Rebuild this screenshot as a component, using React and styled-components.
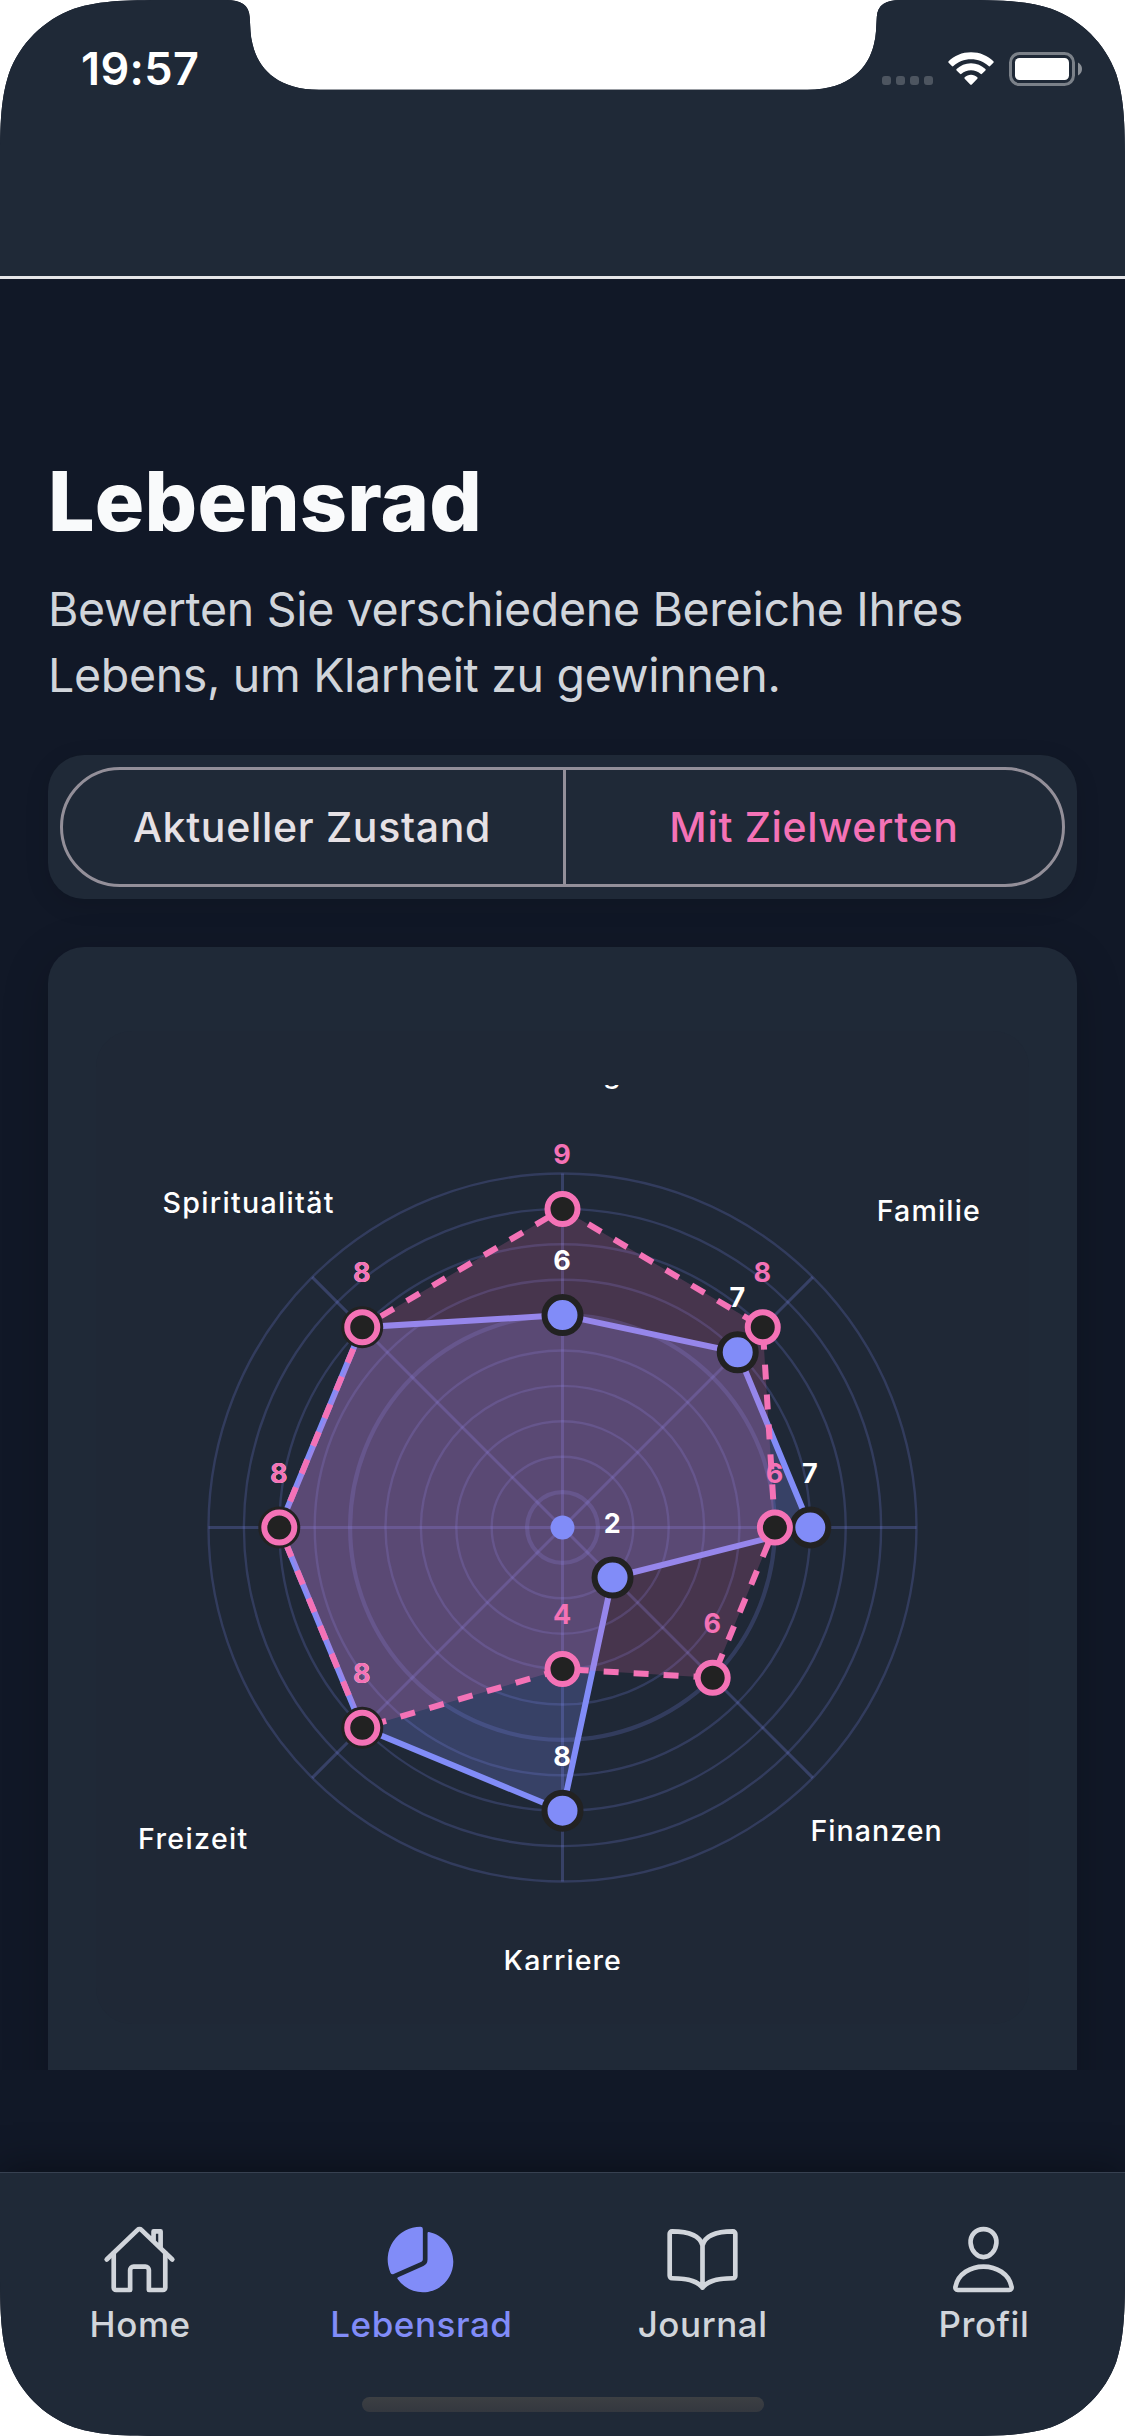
import React from 'react';
import styled, { createGlobalStyle } from 'styled-components';
import { IoHomeOutline, IoPieChart, IoBookOutline, IoPersonOutline } from 'react-icons/io5';

const color = {
  background: '#111827',
  surface: '#1f2937',
  inset: '#1f2836',
  text: '#f9fafb',
  muted: '#d1d5db',
  outline: '#938f99',
  primary: '#818cf8',
  target: '#f472b6',
  ink: '#222222',
};

const GlobalStyle = createGlobalStyle`
  *, *::before, *::after { box-sizing: border-box; }
  body {
    margin: 0;
    background: #ffffff;
    font-family: Inter, "Liberation Sans", sans-serif;
    -webkit-font-smoothing: antialiased;
  }
`;

/* Device silhouette: continuous corners plus the camera notch. */
const W = 1125;
const H = 2436;
const R = 117;
const k = [1.528665, 1.08849296, 0.86840694, 0.63149379, 0.37282383, 0.16905956, 0.07491139].map((v) => +(v * R).toFixed(2));
const [a, b, c, d, e, f, g] = k;
const silhouette = [
  `M${a} 0`,
  'L226 0 C241 0 249 5 249.7 17 C250.4 27 250.2 36 252.5 44 C258 68 277 89.7 319 89.7',
  'L807.5 89.7 C849.5 89.7 868.5 68 874 44 C876.3 36 876.1 27 876.8 17 C877.5 5 885.5 0 900.5 0',
  `L${W - a} 0`,
  `C${W - b} 0 ${W - c} 0 ${W - d} ${g} C${W - e} ${f} ${W - f} ${e} ${W - g} ${d} C${W} ${c} ${W} ${b} ${W} ${a}`,
  `L${W} ${H - a}`,
  `C${W} ${H - b} ${W} ${H - c} ${W - g} ${H - d} C${W - f} ${H - e} ${W - e} ${H - f} ${W - d} ${H - g} C${W - c} ${H} ${W - b} ${H} ${W - a} ${H}`,
  `L${a} ${H}`,
  `C${b} ${H} ${c} ${H} ${d} ${H - g} C${e} ${H - f} ${f} ${H - e} ${g} ${H - d} C0 ${H - c} 0 ${H - b} 0 ${H - a}`,
  `L0 ${a}`,
  `C0 ${b} 0 ${c} ${g} ${d} C${f} ${e} ${e} ${f} ${d} ${g} C${c} 0 ${b} 0 ${a} 0 Z`,
].join(' ');

const Screen = styled.div`
  display: flex;
  flex-direction: column;
  width: ${W}px;
  height: ${H}px;
  background: ${color.background};
  clip-path: path('${silhouette}');
`;

const Header = styled.header`
  flex: none;
  height: 279px;
  background: ${color.surface};
  border-bottom: 3px solid #e5e5e8;
`;

const StatusBar = styled.div`
  display: flex;
  justify-content: space-between;
  align-items: center;
  height: 138px;
  padding: 0 42px 0 81px;
`;

const Clock = styled.span`
  color: #ffffff;
  font-size: 45px;
  font-weight: 600;
  line-height: 54px;
  letter-spacing: 0.4px;
`;

const StatusIcons = styled.div`
  display: flex;
  align-items: center;
  gap: 15px;

  svg { display: block; }
`;

const Content = styled.main`
  flex: none;
  display: flex;
  flex-direction: column;
  height: 1791px;
  padding: 174px 48px 0;
  overflow: hidden;
`;

const Title = styled.h1`
  margin: 0;
  color: ${color.text};
  font-size: 82.5px;
  font-weight: 800;
  line-height: 96px;
  letter-spacing: 0.2px;
`;

const Intro = styled.p`
  margin: 27px 0 0;
  color: ${color.muted};
  font-size: 46.5px;
  line-height: 66px;
  letter-spacing: -0.33px;
  white-space: pre-line;
`;

const ToggleCard = styled.div`
  flex: none;
  height: 144px;
  margin-top: 47px;
  padding: 12px;
  border-radius: 36px;
  background: ${color.surface};
  box-shadow: 0 6px 24px rgba(0, 0, 0, 0.12);
`;

const Segments = styled.div`
  display: grid;
  grid-template-columns: 500px 1fr;
  height: 120px;
  border: 3px solid ${color.outline};
  border-radius: 60px;
`;

const Segment = styled.button`
  padding: 0;
  border: 0;
  background: none;
  color: ${(p) => (p.$active ? color.target : '#e6e1e5')};
  font-family: inherit;
  font-size: 41px;
  font-weight: 500;
  letter-spacing: 0.68px;

  &:first-child { padding-right: 2px; }
  & + & { border-left: 3px solid ${color.outline}; }
`;

const WheelCard = styled.section`
  flex: none;
  height: 1300px;
  margin-top: 48px;
  padding: 84px 48px 0;
  border-radius: 36px 36px 0 0;
  background: ${color.surface};
  box-shadow: 0 12px 48px rgba(0, 0, 0, 0.2);
`;

const WheelPanel = styled.div`
  padding: 54px 24px;
  border-radius: 36px;
  background: ${color.inset};
`;

const Wheel = styled.svg`
  display: block;
  overflow: hidden;
  font-family: Inter, "Liberation Sans", sans-serif;
`;

const AreaLabel = styled.text`
  fill: #ffffff;
  font-size: 28.6px;
  font-weight: 500;
  letter-spacing: ${(p) => p.$tracking}px;
`;

const ValueLabel = styled.text`
  fill: ${(p) => (p.$target ? color.target : '#ffffff')};
  font-size: 27px;
  font-weight: 700;
  text-anchor: middle;
`;

const TabBar = styled.nav`
  display: flex;
  flex: none;
  height: 225px;
  margin-top: 102px;
  padding-top: 49px;
  border-top: 1px solid #374151;
  background: ${color.surface};
  box-shadow: 0 -6px 36px rgba(0, 0, 0, 0.34);
`;

const Tab = styled.a`
  display: flex;
  flex: 1;
  flex-direction: column;
  align-items: center;
  padding-right: 1px;
  color: ${(p) => (p.$active ? color.primary : color.muted)};
  font-size: 35px;
  font-weight: 500;
  line-height: 42px;
  letter-spacing: 0.55px;

  svg {
    width: 75px;
    height: 75px;
    margin: 0 1px 6px 0;
  }
`;

const HomeArea = styled.div`
  display: flex;
  justify-content: center;
  flex: none;
  height: 39px;
  background: ${color.surface};
`;

const HomeIndicator = styled.div`
  width: 402px;
  height: 15px;
  border-radius: 8px;
  background: linear-gradient(#3c3f43, #34383f);
`;

function Signal() {
  return (
    <svg width="51" height="34" viewBox="0 0 51 34" fill="#4d5560">
      {[0, 14, 28, 42].map((x) => (
        <rect key={x} x={x} y="24" width="9" height="9" rx="3" />
      ))}
    </svg>
  );
}

function Wifi() {
  return (
    <svg width="46" height="34" viewBox="0 0 46 34" fill="#ffffff">
      <path d="M23 0.2C31.8 0.2 39.8 3.6 45.4 9.2c.5.5.5 1 0 1.5l-3.3 3.4c-.5.5-1 .5-1.5 0C36 9.800 29.900 7.200 23 7.200S10 9.800 5.400 14.100c-.5.5-1 .5-1.500 0L.600 10.700c-.5-.5-.5-1 0-1.500C6.200 3.600 14.200.200 23 .200Z" />
      <path d="M23 11.200c5.600 0 10.700 2.200 14.400 5.800.5.5.5 1 0 1.500l-3.400 3.300c-.5.5-1 .5-1.500 0C30 19.500 26.700 18.200 23 18.200s-7 1.300-9.500 3.600c-.5.5-1 .5-1.500 0l-3.400-3.300c-.5-.5-.5-1 0-1.500C12.300 13.400 17.400 11.200 23 11.200Z" />
      <path d="M23 22.800c2.400 0 4.600.9 6.300 2.400.5.5.5 1 0 1.500l-5.500 5.700c-.5.5-1.100.5-1.600 0l-5.500-5.700c-.5-.5-.5-1 0-1.500 1.700-1.500 3.900-2.400 6.300-2.400Z" />
    </svg>
  );
}

function Battery() {
  return (
    <svg width="74" height="34" viewBox="0 0 74 34">
      <rect x="1.500" y="1.500" width="63" height="31" rx="9" fill="none" stroke="#7b8189" strokeWidth="3" />
      <rect x="6" y="6" width="54" height="22" rx="4.500" fill="#ffffff" />
      <path d="M69 10.500c2.600 1.200 4 3.700 4 6.500s-1.400 5.300-4 6.500Z" fill="#8b9097" />
    </svg>
  );
}

const SIZE = 885;
const MID = SIZE / 2;
const STEP = 35.4;

const current = [6, 7, 7, 2, 8, 8, 8, 8];
const target = [9, 8, 6, 6, 4, 8, 8, 8];

const areaLabels = [
  { name: 'Beziehung', x: 502, y: -2, anchor: 'end', tracking: 1.2 },
  { name: 'Familie', x: 756.7, y: 136.3, tracking: 1.15 },
  { name: 'Finanzen', x: 690.5, y: 756, tracking: 1 },
  { name: 'Karriere', x: 383.5, y: 886, tracking: 1.05 },
  { name: 'Freizeit', x: 18, y: 764.4, tracking: 1.35 },
  { name: 'Spiritualität', x: 42.5, y: 128.3, tracking: 1.3 },
];

function pointAt(index, value) {
  const angle = (index * Math.PI) / 4 - Math.PI / 2;
  return [MID + Math.cos(angle) * value * STEP, MID + Math.sin(angle) * value * STEP];
}

const polygon = (values) => values.map((v, i) => pointAt(i, v).map((n) => n.toFixed(2)).join(',')).join(' ');

function LifeWheel() {
  return (
    <Wheel width={SIZE} height={SIZE} viewBox={`0 0 ${SIZE} ${SIZE}`}>
      <g fill="none" stroke={color.primary} strokeOpacity="0.2">
        {[1, 2, 3, 4, 5, 6, 7, 8, 9, 10].map((ring) => (
          <circle key={ring} cx={MID} cy={MID} r={ring * STEP} strokeWidth={ring % 5 === 1 ? 4.2 : 2.4} />
        ))}
      </g>
      <g stroke={color.primary} strokeOpacity="0.25" strokeWidth="3">
        {current.map((_, i) => {
          const [x, y] = pointAt(i, 10);
          return <line key={i} x1={MID} y1={MID} x2={x} y2={y} />;
        })}
      </g>

      <polygon points={polygon(current)} fill={color.primary} fillOpacity="0.25" stroke={color.primary} strokeWidth="6" />
      <polygon points={polygon(target)} fill={color.target} fillOpacity="0.19" stroke={color.target} strokeWidth="6" strokeDasharray="15 15" />

      {current.map((v, i) => {
        const [x, y] = pointAt(i, v);
        return (
          <g key={i}>
            <circle cx={x} cy={y} r="18" fill={color.primary} stroke={color.ink} strokeWidth="6" />
            <ValueLabel x={x - 0.4} y={y - 45}>{v}</ValueLabel>
          </g>
        );
      })}
      {target.map((v, i) => {
        const [x, y] = pointAt(i, v);
        return (
          <g key={i}>
            <circle cx={x} cy={y} r="15" fill={color.ink} stroke={color.target} strokeWidth="6" />
            <ValueLabel $target x={x - 0.4} y={y - 45}>{v}</ValueLabel>
          </g>
        );
      })}
      <circle cx={MID} cy={MID} r="12" fill={color.primary} />

      {areaLabels.map((l) => (
        <AreaLabel key={l.name} x={l.x} y={l.y} textAnchor={l.anchor || 'start'} $tracking={l.tracking}>
          {l.name}
        </AreaLabel>
      ))}
    </Wheel>
  );
}

const tabs = [
  { label: 'Home', Icon: IoHomeOutline },
  { label: 'Lebensrad', Icon: IoPieChart, active: true },
  { label: 'Journal', Icon: IoBookOutline },
  { label: 'Profil', Icon: IoPersonOutline },
];

export default function App() {
  return (
    <>
      <GlobalStyle />
      <Screen>
        <Header>
          <StatusBar>
            <Clock>19:57</Clock>
            <StatusIcons>
              <Signal />
              <Wifi />
              <Battery />
            </StatusIcons>
          </StatusBar>
        </Header>
        <Content>
          <Title>Lebensrad</Title>
          <Intro>{'Bewerten Sie verschiedene Bereiche Ihres\nLebens, um Klarheit zu gewinnen.'}</Intro>
          <ToggleCard>
            <Segments>
              <Segment>Aktueller Zustand</Segment>
              <Segment $active>Mit Zielwerten</Segment>
            </Segments>
          </ToggleCard>
          <WheelCard>
            <WheelPanel>
              <LifeWheel />
            </WheelPanel>
          </WheelCard>
        </Content>
        <TabBar>
          {tabs.map(({ label, Icon, active }) => (
            <Tab key={label} $active={active}>
              <Icon />
              {label}
            </Tab>
          ))}
        </TabBar>
        <HomeArea>
          <HomeIndicator />
        </HomeArea>
      </Screen>
    </>
  );
}
